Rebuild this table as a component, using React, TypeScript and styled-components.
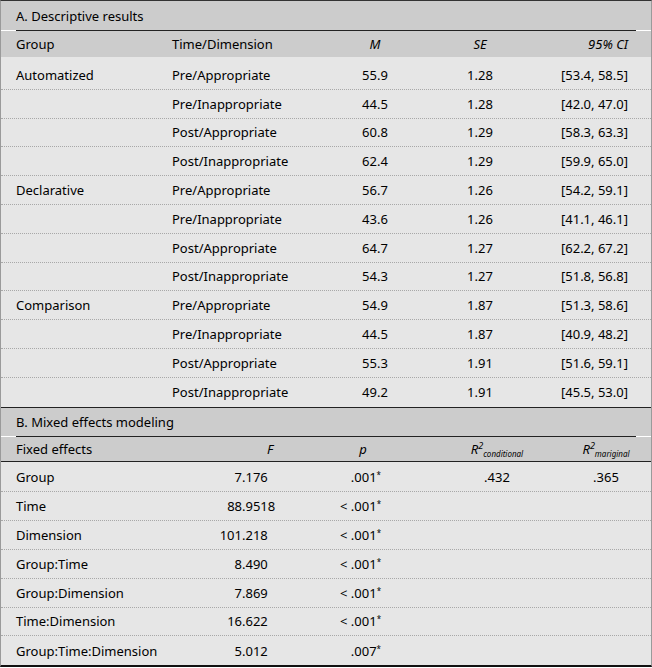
import styled, { createGlobalStyle } from 'styled-components'

const GlobalStyle = createGlobalStyle`
  html, body {
    margin: 0;
    padding: 0;
    background: #ffffff;
  }
  body {
    font-family: 'Noto Sans', 'Liberation Sans', sans-serif;
    font-size: 13px;
    color: #000000;
  }
`

const Frame = styled.div`
  width: 652px;
  box-sizing: border-box;
  border-top: 1px solid #333;
  border-left: 1px solid #9a9a9a;
  border-right: 1px solid #9a9a9a;
  border-bottom: 2px solid #111;
`

const Section = styled.section<{ $last?: boolean }>`
  border-bottom: ${props => props.$last ? 'none' : '1px solid #222'};
`

const TitleBand = styled.div<{ $tall?: boolean }>`
  background: #cccccc;
  height: ${props => props.$tall ? 29 : 28}px;
  display: flex;
  align-items: center;
  padding-left: 15px;
`

const Rule = styled.div`
  height: 1px;
  background: #222;
  margin: 0 15px 0 15px;
`

const HeadBand = styled.div<{ $ruled?: boolean }>`
  background: #cccccc;
  border-bottom: ${props => props.$ruled ? '1px solid #222' : 'none'};
`

const Body = styled.div<{ $top: number }>`
  background: #e6e6e6;
  padding-top: ${props => props.$top}px;
`

const GridRowA = styled.div<{ $dotted?: boolean }>`
  display: grid;
  grid-template-columns: 156px 153px 100px 110px 93px;
  padding: 0 23px 0 15px;
  height: 28.8px;
  box-sizing: border-box;
  align-items: center;
  border-bottom: ${props => props.$dotted ? '1px dotted #a8a8a8' : 'none'};
`

const GridRowB = styled.div<{ $dotted?: boolean }>`
  display: grid;
  grid-template-columns: 184px 140px 46px 44px 134px 84px;
  padding: 0 3px 0 15px;
  height: 28.8px;
  box-sizing: border-box;
  align-items: center;
  border-bottom: ${props => props.$dotted ? '1px dotted #a8a8a8' : 'none'};
`

const HeadRowA = styled(GridRowA)`
  height: 26px;
`

const HeadRowB = styled(GridRowB)`
  height: 24px;
`

const Cell = styled.div<{ $align?: 'left' | 'center' | 'right'; $italic?: boolean; $pad?: number }>`
  text-align: ${props => props.$align || 'left'};
  font-style: ${props => props.$italic ? 'italic' : 'normal'};
  padding-right: ${props => props.$pad || 0}px;
  white-space: nowrap;
`

const DecimalCell = styled.div`
  display: flex;
  white-space: nowrap;
`

const IntPart = styled.span`
  width: 42px;
  text-align: right;
`

const FracPart = styled.span`
  text-align: left;
`

const Star = styled.sup`
  font-size: 8px;
  vertical-align: 4px;
  line-height: 0;
`

const Sup = styled.sup`
  font-size: 9px;
  vertical-align: 5px;
  line-height: 0;
`

const Sub = styled.sub`
  font-size: 8px;
  vertical-align: -3px;
  line-height: 0;
`

const descriptive = [
  ['Automatized', 'Pre/Appropriate', '55.9', '1.28', '[53.4, 58.5]'],
  ['', 'Pre/Inappropriate', '44.5', '1.28', '[42.0, 47.0]'],
  ['', 'Post/Appropriate', '60.8', '1.29', '[58.3, 63.3]'],
  ['', 'Post/Inappropriate', '62.4', '1.29', '[59.9, 65.0]'],
  ['Declarative', 'Pre/Appropriate', '56.7', '1.26', '[54.2, 59.1]'],
  ['', 'Pre/Inappropriate', '43.6', '1.26', '[41.1, 46.1]'],
  ['', 'Post/Appropriate', '64.7', '1.27', '[62.2, 67.2]'],
  ['', 'Post/Inappropriate', '54.3', '1.27', '[51.8, 56.8]'],
  ['Comparison', 'Pre/Appropriate', '54.9', '1.87', '[51.3, 58.6]'],
  ['', 'Pre/Inappropriate', '44.5', '1.87', '[40.9, 48.2]'],
  ['', 'Post/Appropriate', '55.3', '1.91', '[51.6, 59.1]'],
  ['', 'Post/Inappropriate', '49.2', '1.91', '[45.5, 53.0]'],
]

const fixed = [
  { name: 'Group', f: '7.176', p: '.001', less: false, rc: '.432', rm: '.365' },
  { name: 'Time', f: '88.9518', p: '.001', less: true },
  { name: 'Dimension', f: '101.218', p: '.001', less: true },
  { name: 'Group:Time', f: '8.490', p: '.001', less: true },
  { name: 'Group:Dimension', f: '7.869', p: '.001', less: true },
  { name: 'Time:Dimension', f: '16.622', p: '.001', less: true },
  { name: 'Group:Time:Dimension', f: '5.012', p: '.007', less: false },
]

function App() {
  return (
    <>
      <GlobalStyle />
      <Frame>
        <Section>
          <TitleBand $tall>A. Descriptive results</TitleBand>
          <Rule />
          <HeadBand>
            <HeadRowA>
              <Cell>Group</Cell>
              <Cell>Time/Dimension</Cell>
              <Cell $align="center" $italic>M</Cell>
              <Cell $align="center" $italic>SE</Cell>
              <Cell $align="right" $italic>95% CI</Cell>
            </HeadRowA>
          </HeadBand>
          <Body $top={4}>
            {descriptive.map((row, i) => (
              <GridRowA key={i} $dotted={i < descriptive.length - 1}>
                <Cell>{row[0]}</Cell>
                <Cell>{row[1]}</Cell>
                <Cell $align="center">{row[2]}</Cell>
                <Cell $align="center">{row[3]}</Cell>
                <Cell $align="right">{row[4]}</Cell>
              </GridRowA>
            ))}
          </Body>
        </Section>
        <Section $last>
          <TitleBand>B. Mixed effects modeling</TitleBand>
          <Rule />
          <HeadBand $ruled>
            <HeadRowB>
              <Cell>Fixed effects</Cell>
              <Cell $align="center" $italic>F</Cell>
              <Cell $align="center" $italic>p</Cell>
              <Cell />
              <Cell $align="center" $italic>R<Sup>2</Sup><Sub>conditional</Sub></Cell>
              <Cell $align="center" $italic>R<Sup>2</Sup><Sub>mariginal</Sub></Cell>
            </HeadRowB>
          </HeadBand>
          <Body $top={2}>
            {fixed.map((row, i) => {
              const [int, frac] = row.f.split('.')
              return (
                <GridRowB key={row.name} $dotted={i < fixed.length - 1}>
                  <Cell>{row.name}</Cell>
                  <DecimalCell>
                    <IntPart>{int}</IntPart>
                    <FracPart>.{frac}</FracPart>
                  </DecimalCell>
                  <Cell $align="right" $pad={5}>
                    {row.less ? '< ' : ''}{row.p}<Star>*</Star>
                  </Cell>
                  <Cell />
                  <Cell $align="center">{row.rc || ''}</Cell>
                  <Cell $align="center">{row.rm || ''}</Cell>
                </GridRowB>
              )
            })}
          </Body>
        </Section>
      </Frame>
    </>
  )
}

export default App
